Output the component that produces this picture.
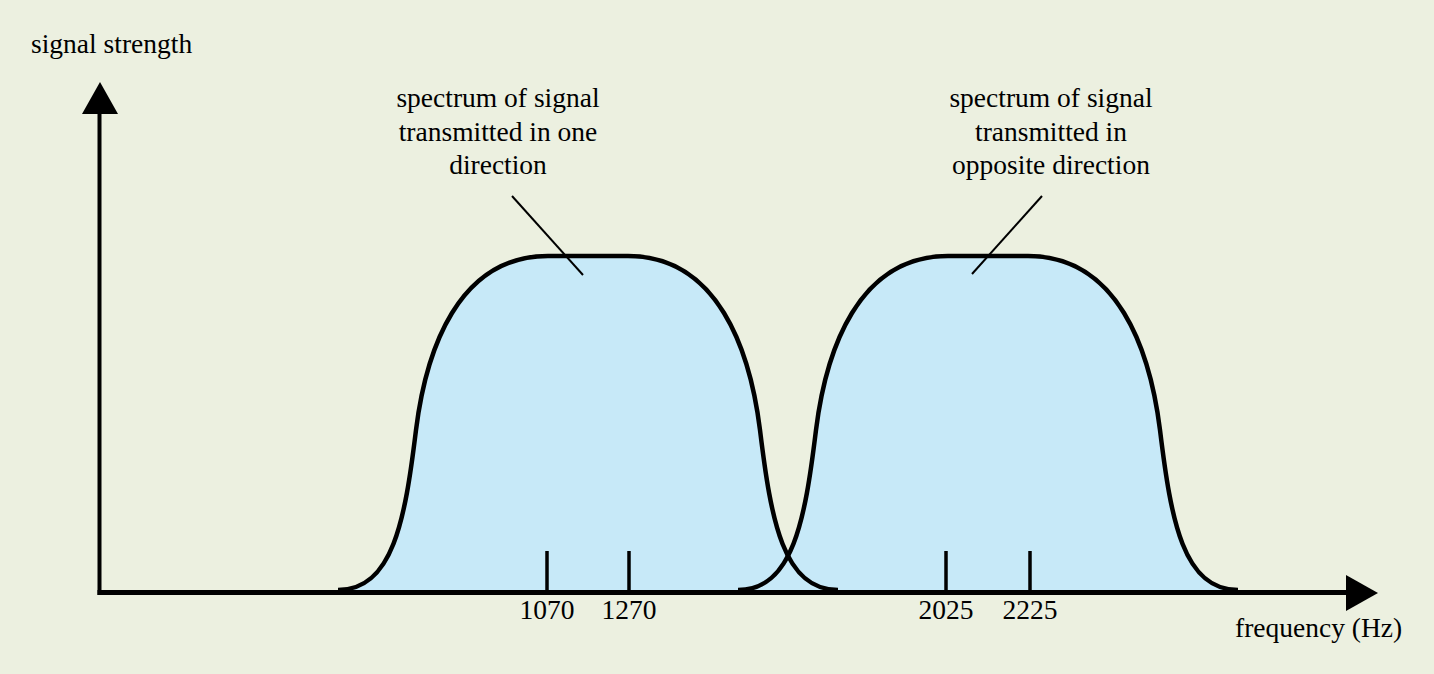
// one band: flat top, two cubic segments per side down to the axis
function bandPath(c: number) {
  const r = (dx: number) => c + dx;
  const l = (dx: number) => c - dx;
  return [
    `M${l(250)},590`,
    `C${l(195)},590 ${l(183)},520 ${l(172)},430`,
    `C${l(162)},350 ${l(130)},256 ${l(40)},256`,
    `L${r(40)},256`,
    `C${r(130)},256 ${r(162)},350 ${r(172)},430`,
    `C${r(183)},520 ${r(195)},590 ${r(250)},590`,
  ].join(" ");
}

const bands = [588, 988].map(bandPath);

const ticks = [
  { x: 547, label: "1070" },
  { x: 629, label: "1270" },
  { x: 946, label: "2025" },
  { x: 1030, label: "2225" },
];

const labels = [
  { x: 498, lines: ["spectrum of signal", "transmitted in one", "direction"] },
  { x: 1051, lines: ["spectrum of signal", "transmitted in", "opposite direction"] },
];

export default function App() {
  return (
    <div className="w-full h-[674px] bg-[#ecf0e0] overflow-hidden">
      <svg
        viewBox="0 0 1434 674"
        width="1434"
        height="674"
        className="block font-['Liberation_Serif','Times_New_Roman',serif] text-[27.5px]"
      >
        {bands.map((d, i) => (
          <path key={`f${i}`} d={`${d} Z`} fill="#c7e9f8" />
        ))}
        {bands.map((d, i) => (
          <path key={`s${i}`} d={d} fill="none" stroke="#000" strokeWidth="4.5" />
        ))}

        {/* axes */}
        <line x1="99.5" y1="108" x2="99.5" y2="595" stroke="#000" strokeWidth="4" />
        <polygon points="100,82 82,114 118,114" fill="#000" />
        <line x1="97.5" y1="592.5" x2="1350" y2="592.5" stroke="#000" strokeWidth="5" />
        <polygon points="1378,593 1346,575 1346,611" fill="#000" />

        {ticks.map((t) => (
          <g key={t.label}>
            <line x1={t.x} y1="551" x2={t.x} y2="592" stroke="#000" strokeWidth="3.5" />
            <text x={t.x} y="619" textAnchor="middle" fill="#000">
              {t.label}
            </text>
          </g>
        ))}

        {/* callouts */}
        <line x1="512" y1="196" x2="583" y2="275" stroke="#000" strokeWidth="2" />
        <line x1="1042" y1="196" x2="972" y2="274" stroke="#000" strokeWidth="2" />

        {labels.map((l) => (
          <text key={l.x} x={l.x} textAnchor="middle" fill="#000">
            {l.lines.map((line, i) => (
              <tspan key={line} x={l.x} y={107 + i * 33.5}>
                {line}
              </tspan>
            ))}
          </text>
        ))}

        <text x="31" y="53" fill="#000">
          signal strength
        </text>
        <text x="1235" y="637" fill="#000">
          frequency (Hz)
        </text>
      </svg>
    </div>
  );
}
